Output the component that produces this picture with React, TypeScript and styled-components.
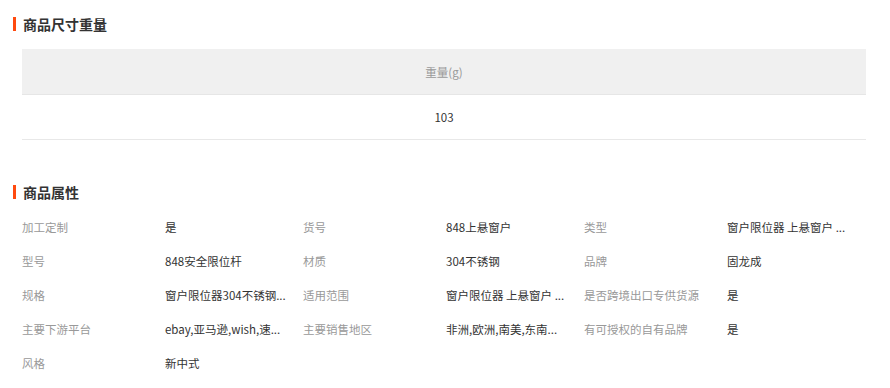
import React, { ReactElement } from 'react';
import styled, { createGlobalStyle } from 'styled-components';

// Global Styles
const GlobalStyle = createGlobalStyle`
  html,
  body {
    margin: 0;
    padding: 0;
    background: #fff;
  }

  body {
    font-family: 'Noto Sans CJK SC', 'Noto Sans', sans-serif;
    color: #333;
  }
`;

// Styled Components
const Page = styled.div`
  width: 890px;
  box-sizing: border-box;
  padding: 17px 24px 0 22px;
`;

const SectionTitle = styled.h3<{ $gap?: number }>`
  margin: ${({ $gap }) => $gap ?? 0}px 0 0 -9px;
  padding-left: 7px;
  border-left: 3px solid #ff4a0f;
  font-size: 14px;
  line-height: 14px;
  font-weight: 700;
  color: #333;
`;

const SizeTable = styled.table`
  width: 100%;
  margin-top: 18px;
  border-collapse: collapse;
  font-size: 11.5px;
`;

const SizeHeading = styled.th`
  height: 45px;
  padding: 0;
  background: #f0f0f0;
  border-bottom: 1px solid #e6e6e6;
  color: #999;
  font-weight: 400;
  text-align: center;
`;

const SizeData = styled.td`
  height: 44px;
  padding: 0;
  border-bottom: 1px solid #e8e8e8;
  color: #333;
  text-align: center;
`;

const AttrGrid = styled.div`
  display: grid;
  grid-template-columns: repeat(3, 143px 138px);
  grid-auto-rows: 34px;
  margin-top: 11px;
  font-size: 11.5px;
`;

const AttrLabel = styled.div`
  display: flex;
  align-items: center;
  color: #999;
  white-space: nowrap;
`;

const AttrValue = styled.div`
  display: flex;
  align-items: center;
  color: #333;
  white-space: nowrap;
`;

// Data
interface Attribute {
  label: string;
  value: string;
}

const attributes: Attribute[] = [
  { label: '加工定制', value: '是' },
  { label: '货号', value: '848上悬窗户' },
  { label: '类型', value: '窗户限位器 上悬窗户 ...' },
  { label: '型号', value: '848安全限位杆' },
  { label: '材质', value: '304不锈钢' },
  { label: '品牌', value: '固龙成' },
  { label: '规格', value: '窗户限位器304不锈钢...' },
  { label: '适用范围', value: '窗户限位器 上悬窗户 ...' },
  { label: '是否跨境出口专供货源', value: '是' },
  { label: '主要下游平台', value: 'ebay,亚马逊,wish,速...' },
  { label: '主要销售地区', value: '非洲,欧洲,南美,东南...' },
  { label: '有可授权的自有品牌', value: '是' },
  { label: '风格', value: '新中式' },
];

const App = (): ReactElement => (
  <>
    <GlobalStyle />
    <Page>
      <SectionTitle>商品尺寸重量</SectionTitle>
      <SizeTable>
        <thead>
          <tr>
            <SizeHeading>重量(g)</SizeHeading>
          </tr>
        </thead>
        <tbody>
          <tr>
            <SizeData>103</SizeData>
          </tr>
        </tbody>
      </SizeTable>

      <SectionTitle $gap={45}>商品属性</SectionTitle>
      <AttrGrid>
        {attributes.map((attr) => (
          <React.Fragment key={attr.label}>
            <AttrLabel>{attr.label}</AttrLabel>
            <AttrValue>{attr.value}</AttrValue>
          </React.Fragment>
        ))}
      </AttrGrid>
    </Page>
  </>
);

export default App;
